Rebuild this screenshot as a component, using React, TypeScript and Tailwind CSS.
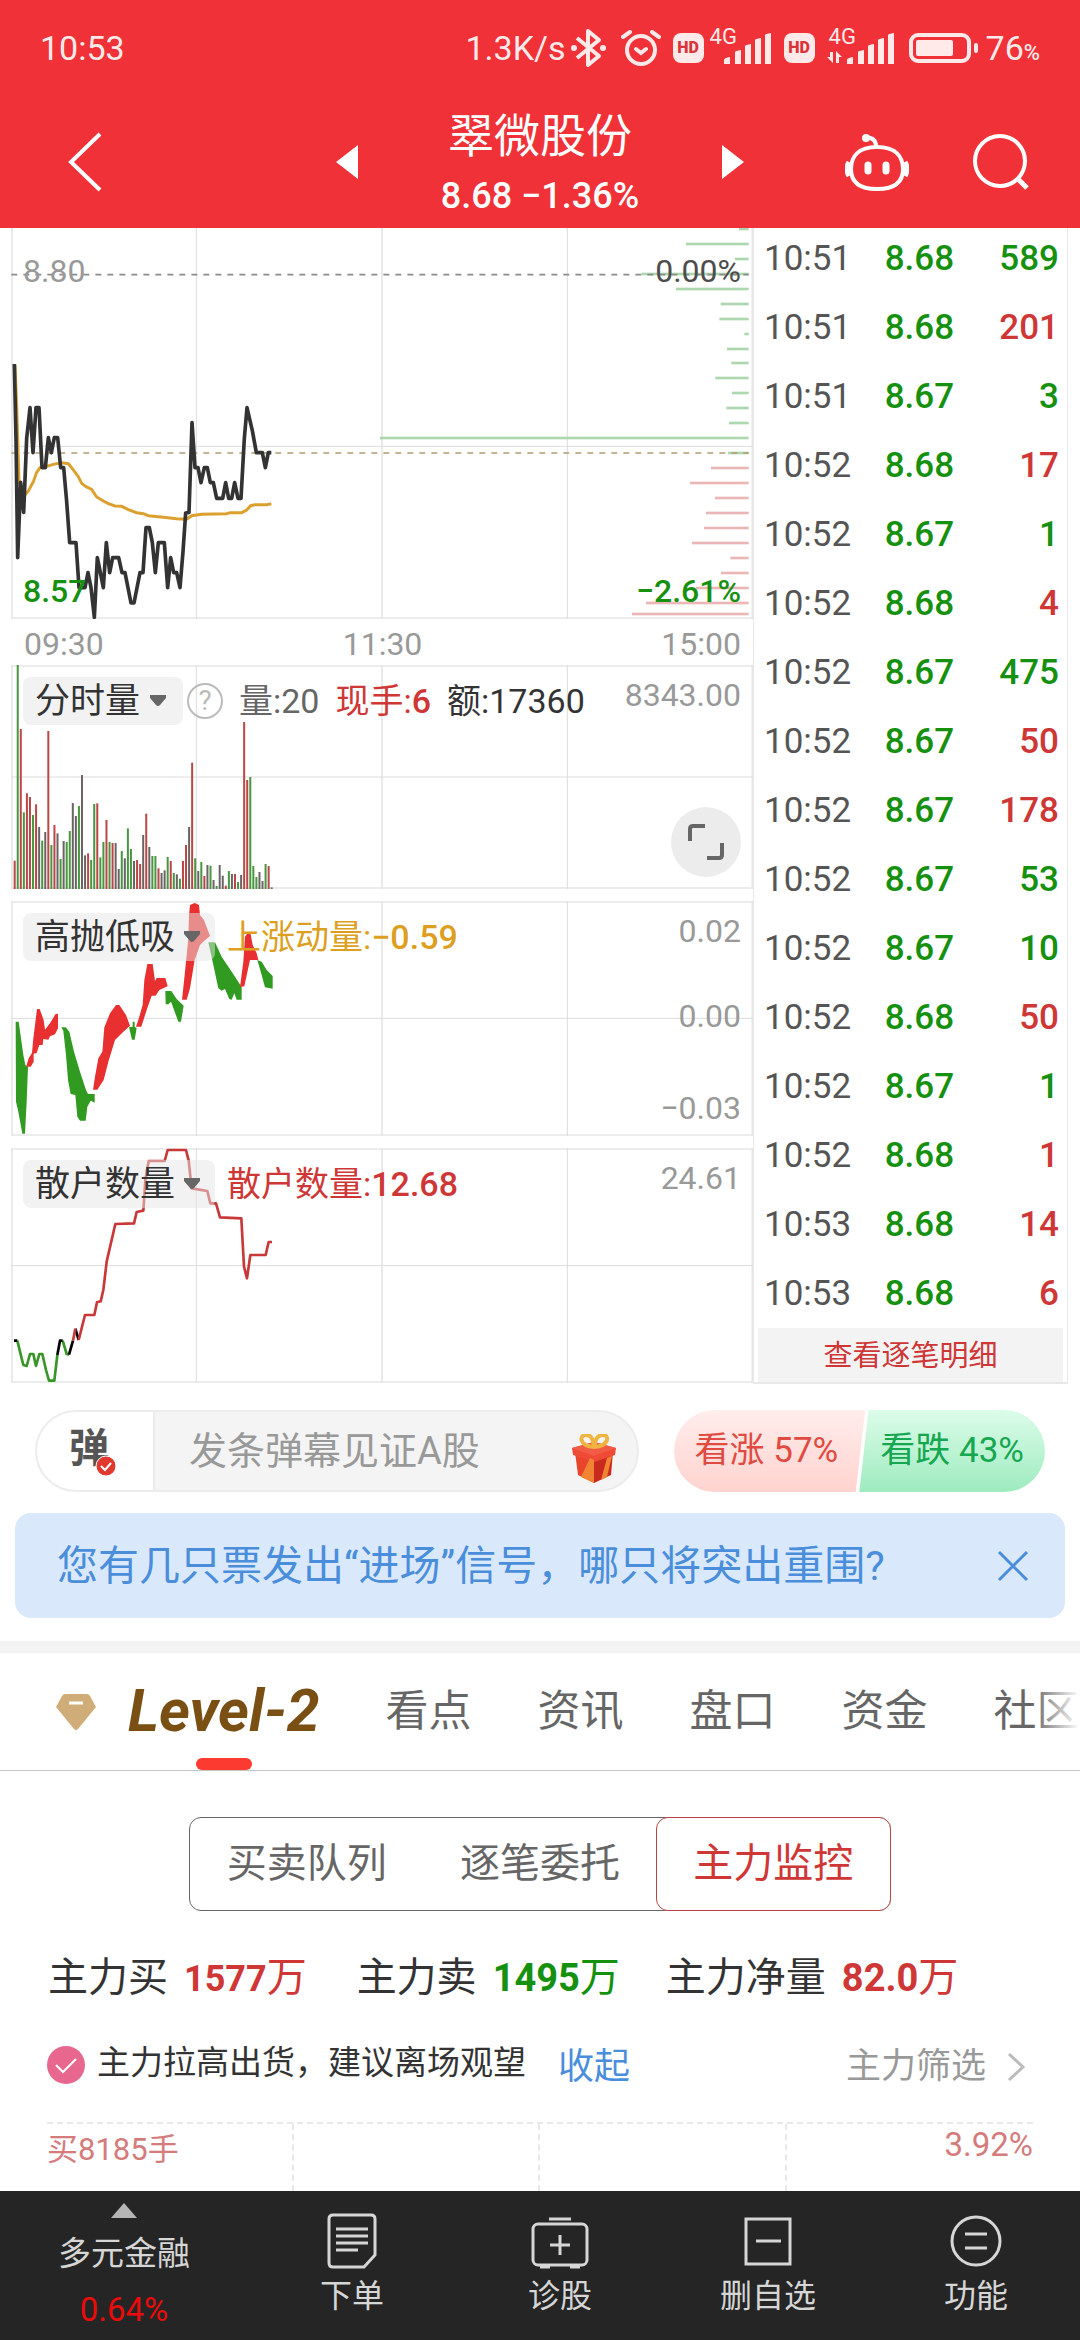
import React from "react";

const VOLUME =
  "602r 15g 207r 457g 400r 411r 465g 433r 501k 542g 516k 213r 555g 495r 520k 597g 543k 546g 513g 429k 468k 438g 345k 586k 580r 600g 432g 430r 592g 546g 480r 546g 549r 549k 627k 573g 595k 505g 567g 603k 600r 612r 525k 461r 561k 588g 588g 625r 639k 631k 591g 603r 639g 643k 656g 603r 555r 501k 308r 595g 633k 606g 648r 615k 617g 660k 678g 615k 647k 677r 633g 642k 642r 666g 645k 186r 360r 351g 618g 651g 636k 663k 612g 618r 682k"
    .split(" ")
    .map((s) => ({ top: parseInt(s, 10), tone: s.slice(-1) }));

const TONES: Record<string, string> = { r: "#bb4646", g: "#48963f", k: "#6b6464" };

const PRICE_VOLUME: [number, number, string][] = [
  [12, 1137, "g"], [57, 978, "g"], [102, 1125, "g"], [147, 845, "g"], [192, 948, "g"],
  [237, 1082, "g"], [282, 1078, "g"], [327, 1153, "g"], [372, 1101, "g"], [414, 1114, "g"],
  [459, 1066, "g"], [504, 1116, "g"], [549, 1099, "g"], [594, 1107, "g"], [639, 60, "g"],
  [684, 1104, "g"], [729, 1053, "r"], [774, 990, "r"], [819, 1065, "r"], [864, 1038, "r"],
  [909, 1032, "r"], [954, 996, "r"], [999, 1111, "r"], [1044, 1083, "r"], [1089, 1008, "r"],
  [1134, 858, "r"], [1167, 816, "r"],
];

const QUOTES: [string, string, string, boolean][] = [
  ["10:51", "8.68", "589", false],
  ["10:51", "8.68", "201", true],
  ["10:51", "8.67", "3", false],
  ["10:52", "8.68", "17", true],
  ["10:52", "8.67", "1", false],
  ["10:52", "8.68", "4", true],
  ["10:52", "8.67", "475", false],
  ["10:52", "8.67", "50", true],
  ["10:52", "8.67", "178", true],
  ["10:52", "8.67", "53", false],
  ["10:52", "8.67", "10", false],
  ["10:52", "8.68", "50", true],
  ["10:52", "8.67", "1", false],
  ["10:52", "8.68", "1", true],
  ["10:53", "8.68", "14", true],
  ["10:53", "8.68", "6", true],
];

function Grid({ top, mid, bottom }: { top: number; mid: number; bottom: number }) {
  return (
    <g stroke="#e6e6e6" strokeWidth="5" fill="none">
      <path d={`M36 ${top}V${bottom}M1146 ${top}V${bottom}M2257 ${top}V${bottom}M34 ${bottom - 3}H2259`} />
      <path stroke="#dcdcdc" strokeWidth="3" d={`M589 ${top}V${bottom}M1702 ${top}V${bottom}M34 ${mid}H2259`} />
    </g>
  );
}

function Plot({ box, children }: { box: string; children: React.ReactNode }) {
  return (
    <svg className="absolute inset-0 h-full w-full" viewBox={box} preserveAspectRatio="none" aria-hidden="true">
      {children}
    </svg>
  );
}

function IndicatorButton({ label, wide = false }: { label: string; wide?: boolean }) {
  return (
    <button
      className={
        wide
          ? "flex h-12 w-48 items-center justify-between rounded-lg bg-[#e5e5e5]/50 pl-3 pr-3.5 text-[35px] text-[#333]"
          : "flex h-12 w-40 items-center justify-between rounded-lg bg-[#e5e5e5]/50 pl-3 pr-4 text-[35px] text-[#333]"
      }
    >
      {label}
      <svg width="18" height="12" viewBox="0 0 18 12" aria-hidden="true">
        <path d="M1 0h16v3l-6 7q-2 2-4 0L1 3z" fill="#666" />
      </svg>
    </button>
  );
}

function Signal() {
  return (
    <svg width="48" height="31" viewBox="0 0 48 31" fill="#ffe9e9" aria-hidden="true">
      <path d="M0 31v-4q0-2 6-3v7zM11 31V19q0-1 6-2v14zM21 31V13q0-1 6-2v20zM31 31V7q0-1 6-2v26zM41 31V2q0-1 6-2v31z" />
    </svg>
  );
}

function Hd() {
  return (
    <span className="flex h-[30px] w-[31px] items-center justify-center rounded-lg bg-[#ffe9e9] text-base font-black text-[#d8353b]">
      HD
    </span>
  );
}

function StatusBar() {
  return (
    <div className="flex h-24 items-center pl-10 pr-10 text-[34px] text-[#ffe9e9]">
      <span>10:53</span>
      <span className="ml-auto">1.3K/s</span>
      <svg className="ml-1" width="37" height="40" viewBox="0 0 37 40" fill="none" stroke="currentColor" strokeWidth="4" aria-hidden="true">
        <path d="M7 10l22 18-11 9V3l11 9L7 30" strokeLinejoin="round" />
        <circle cx="4" cy="20" r="3" fill="currentColor" stroke="none" />
        <circle cx="33" cy="20" r="3" fill="currentColor" stroke="none" />
      </svg>
      <svg className="ml-3.5" width="40" height="38" viewBox="0 0 40 38" fill="none" stroke="currentColor" strokeWidth="4" strokeLinecap="round" aria-hidden="true">
        <circle cx="20" cy="21" r="14" />
        <path d="M15 20l5 4 5-4M2 8l7-5M31 3l7 5" />
      </svg>
      <span className="ml-3"><Hd /></span>
      <span className="relative ml-5 flex h-[31px] items-end">
        <span className="absolute -left-3.5 -top-2 text-[22px] leading-6">4G</span>
        <Signal />
      </span>
      <span className="ml-3"><Hd /></span>
      <span className="relative ml-3 flex h-[31px] items-end gap-1">
        <span className="absolute left-0.5 -top-2 text-[22px] leading-6">4G</span>
        <svg width="16" height="14" viewBox="0 0 16 14" fill="currentColor" aria-hidden="true">
          <path d="M3 2h3v11L0 7h3zM9 13V1l6 6h-3v6z" />
        </svg>
        <Signal />
      </span>
      <svg className="ml-3.5" width="69" height="30" viewBox="0 0 69 30" aria-hidden="true">
        <rect x="2" y="2" width="58" height="26" rx="7" fill="none" stroke="currentColor" strokeWidth="4" />
        <rect x="7" y="7" width="37" height="16" rx="2" fill="currentColor" />
        <rect x="65" y="10" width="4" height="10" rx="2" fill="currentColor" />
      </svg>
      <span className="ml-2 leading-none">
        76<span className="text-[22px] font-medium">%</span>
      </span>
    </div>
  );
}

function Header() {
  return (
    <header className="relative bg-[#f03138] text-white">
      <StatusBar />
      <div className="grid h-33 grid-cols-[1fr_auto_1fr] items-center px-[51px]">
        <button aria-label="返回" className="ml-3 w-12">
          <svg width="40" height="60" viewBox="0 0 40 60" fill="none" stroke="currentColor" strokeWidth="4" aria-hidden="true">
            <path d="M37 2L8 30l29 28" />
          </svg>
        </button>
        <div className="flex w-[408px] items-center justify-between">
          <button aria-label="上一只">
            <svg width="22" height="34" viewBox="0 0 22 34" fill="currentColor" aria-hidden="true">
              <path d="M22 0v34L0 17z" />
            </svg>
          </button>
          <div className="text-center">
            <h1 className="text-[46px] leading-[60px]">翠微股份</h1>
            <p className="pt-2 text-[36px] font-medium leading-[44px]">8.68 −1.36%</p>
          </div>
          <button aria-label="下一只">
            <svg width="22" height="34" viewBox="0 0 22 34" fill="currentColor" aria-hidden="true">
              <path d="M0 0v34l22-17z" />
            </svg>
          </button>
        </div>
        <div className="flex items-center justify-end gap-16">
          <button aria-label="智能助手">
            <svg width="64" height="60" viewBox="0 0 64 60" fill="none" stroke="currentColor" strokeWidth="4" aria-hidden="true">
              <path d="M32 15C50 15 58 24 58 37S50 57 32 57 6 50 6 37 14 15 32 15z" />
              <path d="M31 14q0-8-10-9" />
              <circle cx="21" cy="6" r="4" fill="currentColor" stroke="none" />
              <path d="M4 30q-4 7 0 14M60 30q4 7 0 14" strokeWidth="5" />
              <path d="M23 33v6M41 33v6" strokeWidth="7" strokeLinecap="round" />
            </svg>
          </button>
          <button aria-label="搜索">
            <svg width="56" height="56" viewBox="0 0 56 56" fill="none" stroke="currentColor" strokeWidth="4" aria-hidden="true">
              <circle cx="27" cy="27" r="25" />
              <path d="M44 44l10 10" strokeWidth="5" />
            </svg>
          </button>
        </div>
      </div>
    </header>
  );
}

function PricePanel() {
  return (
    <div className="relative flex h-[391px] flex-col justify-between pb-2 pl-[23px] pr-3 pt-[23px] text-[32px] leading-10">
      <Plot box="0 9 2259 1173">
        <Grid top={9} mid={664} bottom={1182} />
        {PRICE_VOLUME.map(([y, x, tone]) => (
          <rect key={y} x={x + 1080} y={y - 4} width={1166 - x} height="8" fill={tone === "g" ? "#add7ae" : "#eab6b6"} />
        ))}
        <path d="M34 149H2246" stroke="#8c8c8c" strokeWidth="5" strokeDasharray="18 18" />
        <path d="M34 684H2246" stroke="#b39b74" strokeWidth="5" strokeDasharray="18 18" />
        <path
          d="M45 420L50 540 57 770 75 810 85 798 100 770 110 742 120 728 140 724 160 718 185 713 205 716 215 728 235 755 245 775 258 785 275 793 290 816 310 828 325 836 345 843 365 844 385 854 410 863 430 866 445 872 490 877 530 881 560 883 575 872 605 868 680 866 690 863 725 863 740 855 752 842 765 839 800 839 814 836"
          fill="none" stroke="#dba02f" strokeWidth="9"
        />
        <path
          d="M43 417L48 640 53 998 62 772 71 862 80 640 90 548 99 683 108 548 117 548 126 728 136 728 145 638 154 683 163 638 173 638 182 728 191 728 200 830 209 953 228 953 237 1088 255 1088 264 1043 273 1088 283 1177 292 998 310 1088 319 953 329 1043 338 998 356 998 366 1043 375 1043 393 1134 402 1134 420 1043 429 1043 438 908 448 908 457 953 466 1043 475 953 493 953 503 1088 512 998 521 1043 530 1043 540 1088 549 980 557 864 567 862 576 593 585 728 594 728 603 773 613 728 622 728 631 773 640 773 650 820 668 820 677 773 686 820 695 820 704 773 714 820 723 820 733 640 741 548 757 617 769 683 787 683 796 728 805 683 814 683"
          fill="none" stroke="#333" strokeWidth="11" strokeLinejoin="round"
        />
      </Plot>
      <div className="relative flex justify-between">
        <span className="text-[#999]">8.80</span>
        <span className="text-[#4d4d4d]">0.00%</span>
      </div>
      <div className="relative flex justify-between font-medium text-[#15900f]">
        <span>8.57</span>
        <span>−2.61%</span>
      </div>
    </div>
  );
}

function VolumePanel() {
  return (
    <div className="relative flex h-56 flex-col justify-between pb-3 pl-[23px] pr-3 pt-3">
      <Plot box="0 15 2259 672">
        <path d="M34 18H2259" stroke="#e6e6e6" strokeWidth="5" />
        <Grid top={15} mid={351} bottom={687} />
        {VOLUME.map(({ top, tone }, i) => (
          <rect key={i} x={41 + i * 9.18} y={top} width="6" height={687 - top} fill={TONES[tone]} />
        ))}
      </Plot>
      <div className="relative flex items-center whitespace-nowrap text-[34px] leading-none">
        <IndicatorButton label="分时量" />
        <button aria-label="说明" className="ml-1 flex h-9 w-9 items-center justify-center rounded-full border-2 border-[#bbb] text-[28px] text-[#bbb]">?</button>
        <span className="ml-4 text-[#666]">量:20</span>
        <span className="ml-4 text-[#cf3636]">现手:<b className="font-medium">6</b></span>
        <span className="ml-4 text-[#333]">额:17360</span>
        <span className="ml-auto self-start text-[32px] leading-9 text-[#999]">8343.00</span>
      </div>
      <button aria-label="全屏" className="relative flex h-[70px] w-[70px] items-center justify-center self-end rounded-full bg-[#ececec]">
        <svg width="38" height="38" viewBox="0 0 38 38" fill="none" stroke="#666" strokeWidth="4" aria-hidden="true">
          <path d="M3 18V6q0-3 3-3h12M35 20v12q0 3-3 3H20" />
        </svg>
      </button>
    </div>
  );
}

function MomentumPanel() {
  return (
    <div className="relative mt-3 flex h-[235px] pl-[23px] pr-3 pt-3">
      <Plot box="0 18 2259 705">
        <path d="M34 21H2259" stroke="#e6e6e6" strokeWidth="5" />
        <Grid top={18} mid={370} bottom={723} />
        <g fill="#319a20">
          <path d="M47 380H56L70 480 76 510 84 515 80 620 75 716H67L55 650 48 620z" />
          <path d="M184 397H197L208 410 222 470 240 530 258 585 264 597H284V623L272 617 262 635 257 677H240L232 665 226 600 212 597 204 555 198 480 190 408z" />
          <path d="M387 397L398 395V380H404V395L410 400 404 434H396z" />
          <path d="M496 288H514L530 312 551 332 543 380H535L513 320 505 328H497z" />
          <path d="M625 142H645L665 185 700 238 725 276V314H710L703 295 695 314 688 312 675 282 665 287 655 280 640 210z" />
          <path d="M772 195L785 200 800 225 818 243V281L795 277 785 240z" />
        </g>
        <g fill="#e83031">
          <path d="M80 515H92L101 500V476L110 474 118 450H128L130 432 145 434 150 424 165 418 174 400V356L166 358 150 385 135 404 131 375 119 342H111L100 430 96 474 86 490 80 510z" />
          <path d="M279 584H292L311 555 325 500 345 435 370 410 390 392 378 360 358 330H348L330 355 313 397 307 470 295 490 285 545z" />
          <path d="M408 395H424L440 345 455 302H467L478 285 503 274 496 249H470L465 258 458 207H442L433 255 428 330 415 375z" />
          <path d="M546 314H560L570 280 584 195 600 150 612 138 630 123 612 75 600 60 597 30 584 24 570 30 567 60 565 130 555 230z" />
          <path d="M720 276L733 274 750 195H775L770 175 758 150 752 118 742 115 735 125 730 200z" />
        </g>
      </Plot>
      <div className="relative flex h-12 items-center whitespace-nowrap text-[34px] leading-none">
        <IndicatorButton label="高抛低吸" wide />
        <span className="ml-3 text-[#dd9f22]">上涨动量:<b className="font-medium">−0.59</b></span>
      </div>
      <div className="relative ml-auto flex flex-col justify-between pb-2.5 text-right text-[32px] leading-9 text-[#999]">
        <span>0.02</span>
        <span className="pb-2">0.00</span>
        <span>−0.03</span>
      </div>
    </div>
  );
}

function RetailPanel() {
  return (
    <div className="relative mt-3 flex h-[235px] pl-[23px] pr-3 pt-3">
      <Plot box="0 24 2259 705">
        <path d="M34 27H2259" stroke="#e6e6e6" strokeWidth="5" />
        <Grid top={24} mid={377} bottom={729} />
        <g fill="none" strokeWidth="8" strokeLinejoin="round">
          <path stroke="#379626" d="M52 602L60 635 70 675 80 678 90 642H100L108 678 118 642H127L138 690 147 722H163L172 645M188 602L200 642 207 644" />
          <path stroke="#000" d="M42 602H52M172 645L180 602H188M207 644L219 602M226 566L236 600" />
          <path stroke="#c93838" d="M219 602L226 566M236 600L255 525H283L291 487 302 484 310 450 320 365 346 252 402 250 410 216 430 212 436 120 446 63H494L503 30H558L566 62 575 145 622 153 631 190H648L660 232 724 235 732 380 741 415 751 345H797L806 306H816" />
        </g>
      </Plot>
      <div className="relative flex h-12 items-center whitespace-nowrap text-[34px] leading-none">
        <IndicatorButton label="散户数量" wide />
        <span className="ml-3 text-[#cf3636]">散户数量:<b className="font-medium">12.68</b></span>
      </div>
      <span className="relative ml-auto text-[32px] leading-9 text-[#999]">24.61</span>
    </div>
  );
}

function QuoteList() {
  return (
    <aside className="mr-3 flex flex-col border-b-2 border-l border-r border-[#e8e8e8]">
      <table className="-mt-1 w-full text-[35px] leading-none">
        <tbody>
          {QUOTES.map(([time, price, count, up], i) => (
            <tr key={i} className="h-[69px]">
              <td className="pl-2.5 text-[#555]">{time}</td>
              <td className="pl-0.5 font-medium text-[#15900f]">{price}</td>
              <td className={up ? "pr-2 text-right font-medium text-[#cf3636]" : "pr-2 text-right font-medium text-[#15900f]"}>{count}</td>
            </tr>
          ))}
        </tbody>
      </table>
      <button className="mx-1 h-[54px] bg-[#f3f3f3] pt-0.5 text-[29px] leading-10 text-[#cf3636]">查看逐笔明细</button>
    </aside>
  );
}

function Gift() {
  return (
    <svg width="46" height="50" viewBox="0 0 46 50" aria-hidden="true">
      <path d="M4 18l19 8v23L7 41z" fill="#e8452c" />
      <path d="M42 18l-19 8v23l17-8z" fill="#c92a20" />
      <path d="M1 14l22-6 22 6-1 7-21 7L2 21z" fill="#ee4a35" />
      <path d="M1 14l22 8 22-8-22-6z" fill="#f25b44" />
      <path d="M10 43l9-19 4 2v23zM30 46l6-22 5-2-5 21z" fill="#f08433" />
      <path d="M23 13C8 12 8 1 15 1s7 7 8 12c1-5 2-12 9-12s6 11-9 12z" fill="none" stroke="#f0b440" strokeWidth="4" />
    </svg>
  );
}

function Barrage() {
  return (
    <div className="flex items-center gap-[35px] px-[35px] pt-[26px]">
      <div className="flex h-[82px] flex-[602] overflow-hidden rounded-full border-2 border-[#ececec] bg-[#f4f4f4]">
        <button aria-label="弹幕开关" className="relative flex w-[118px] shrink-0 items-center border-r-2 border-[#ececec] bg-white pl-8 text-[40px] font-bold leading-none text-[#555]">
          <span className="relative pb-1">
            弹
            <svg className="absolute -bottom-1 -right-2" width="22" height="22" viewBox="0 0 22 22" aria-hidden="true">
              <circle cx="11" cy="11" r="10" fill="#e0392f" stroke="#fff" strokeWidth="1" />
              <path d="M6 11l4 4 6-7" fill="none" stroke="#fff" strokeWidth="2" />
            </svg>
          </span>
        </button>
        <input aria-label="发弹幕" placeholder="发条弹幕见证A股" className="w-0 min-w-0 flex-1 bg-transparent pl-[34px] text-[38px] text-[#333] outline-none placeholder:text-[#999]" />
        <button aria-label="礼物" className="pr-5 pt-4"><Gift /></button>
      </div>
      <div className="flex h-[82px] flex-[373] overflow-hidden rounded-full text-[35px]">
        <button className="flex-1 bg-gradient-to-b from-[#ffedec] to-[#ffd3cf] pr-1.5 text-[#e14a40] [clip-path:polygon(0_0,100%_0,95%_100%,0_100%)]">看涨 57%</button>
        <button className="-ml-1.5 flex-1 bg-gradient-to-b from-[#dcfcea] to-[#9debbf] text-[#16a750] [clip-path:polygon(5%_0,100%_0,100%_100%,0_100%)]">看跌 43%</button>
      </div>
    </div>
  );
}

function Banner() {
  return (
    <div className="mx-[15px] mt-[21px] flex h-[105px] items-center justify-between rounded-2xl bg-[#d9e8fb] pl-[42px] pr-[36px] text-[#4a8edb]">
      <a href="#signal" className="pt-0.5 text-[41px]">您有几只票发出“进场”信号，哪只将突出重围?</a>
      <button aria-label="关闭">
        <svg width="32" height="32" viewBox="0 0 32 32" fill="none" stroke="currentColor" strokeWidth="3" aria-hidden="true">
          <path d="M2 2l28 28M30 2L2 30" />
        </svg>
      </button>
    </div>
  );
}

function Tabs() {
  return (
    <nav className="relative mt-[23px] flex h-[130px] items-stretch gap-[66px] overflow-hidden whitespace-nowrap border-b border-t-[12px] border-b-[#c4c4c4] border-t-[#f3f3f3] pl-[56px] text-[43px] text-[#666]">
      <button className="flex items-center gap-8">
        <svg width="40" height="38" viewBox="0 0 40 38" aria-hidden="true">
          <path d="M9 1h22q2 0 3 2l6 11-18 22q-2 2-4 0L0 14 6 3q1-2 3-2z" fill="#d0ac78" />
          <path d="M13 10h14" stroke="#fff" strokeWidth="3" />
        </svg>
        <span className="relative flex h-full items-center text-[59px] font-bold italic text-[#7a4f14]">
          Level-2
          <span className="absolute bottom-0 left-1/2 h-3 w-14 -translate-x-1/2 rounded-full bg-[#fc3a30]" />
        </span>
      </button>
      <button>看点</button>
      <button>资讯</button>
      <button>盘口</button>
      <button>资金</button>
      <button>社区</button>
      <span className="pointer-events-none absolute inset-y-0 right-0 w-12 bg-gradient-to-r from-transparent to-white" />
    </nav>
  );
}

function Monitor() {
  return (
    <section>
      <div className="mx-auto mt-[46px] grid h-[94px] w-[65%] grid-cols-3 rounded-xl border border-[#666] text-[40px] text-[#666]">
        <button>买卖队列</button>
        <button>逐笔委托</button>
        <button className="-m-px rounded-xl border border-[#b84444] bg-white text-[#cf3636]">主力监控</button>
      </div>
      <div className="mt-9 flex h-[60px] items-center whitespace-nowrap px-12 pt-0.5 text-[40px] text-[#333]">
        <span>主力买</span>
        <span className="ml-4 text-[#cf3636]"><b className="text-[36px]">1577</b>万</span>
        <span className="ml-[50px]">主力卖</span>
        <span className="ml-4 text-[#15900f]"><b className="text-[38px]">1495</b>万</span>
        <span className="ml-[46px]">主力净量</span>
        <span className="ml-4 text-[#cf3636]"><b className="text-[38px]">82.0</b>万</span>
      </div>
      <div className="mt-7 flex h-[60px] items-center whitespace-nowrap pl-[47px] pr-[54px]">
        <svg width="38" height="38" viewBox="0 0 38 38" aria-hidden="true">
          <circle cx="19" cy="19" r="19" fill="#e8678f" />
          <path d="M9 19l7 7 13-13" fill="none" stroke="#fff" strokeWidth="2" />
        </svg>
        <span className="ml-3 pb-1 text-[33px] text-[#333]">主力拉高出货，建议离场观望</span>
        <button className="ml-8 pt-1 text-[36px] text-[#4a8edb]">收起</button>
        <button className="ml-auto flex items-center gap-5 pt-1 text-[35px] text-[#999]">
          主力筛选
          <svg width="20" height="30" viewBox="0 0 20 30" fill="none" stroke="#bbb" strokeWidth="3" aria-hidden="true">
            <path d="M3 2l14 13L3 28" />
          </svg>
        </button>
      </div>
      <div className="mx-[47px] mt-[27px] grid h-[69px] grid-cols-4 border-t-2 border-dashed border-[#e8e8e8] leading-none text-[#d47c7c]">
        <span className="border-r-2 border-dashed border-[#e8e8e8] pt-2.5 text-[31px]">买8185手</span>
        <span className="border-r-2 border-dashed border-[#e8e8e8]" />
        <span className="border-r-2 border-dashed border-[#e8e8e8]" />
        <span className="pt-1 text-right text-[33px]">3.92%</span>
      </div>
    </section>
  );
}

function BottomItem({ label, children }: { label: string; children: React.ReactNode }) {
  return (
    <button className="flex flex-col items-center pt-5">
      <svg width="60" height="60" viewBox="0 0 60 60" fill="none" stroke="#d6d6d6" strokeWidth="3" aria-hidden="true">
        {children}
      </svg>
      <span className="pt-1 leading-[42px]">{label}</span>
    </button>
  );
}

function BottomBar() {
  return (
    <footer className="grid h-[149px] grid-cols-[248fr_208fr_208fr_208fr_208fr] bg-[#252525] text-[32px] text-[#d6d6d6]">
      <button className="flex flex-col items-center pt-3 text-[33px]">
        <svg width="26" height="15" viewBox="0 0 26 15" aria-hidden="true">
          <path d="M13 0l13 15H0z" fill="#b5b5b5" />
        </svg>
        <span className="pt-3 leading-[48px]">多元金融</span>
        <span className="pt-2 leading-[48px] text-[#ea0b0b]">0.64%</span>
      </button>
      <BottomItem label="下单">
        <path d="M11 4h38q4 0 4 4v36L42 56H11q-4 0-4-4V8q0-4 4-4z" />
        <path d="M14 18h32M14 25h32M14 32h32M14 39h22" />
      </BottomItem>
      <BottomItem label="诊股">
        <rect x="3" y="13" width="54" height="41" rx="5" />
        <path d="M19 8h22M10 56h10M40 56h10M30 24v20M20 34h20" />
      </BottomItem>
      <BottomItem label="删自选">
        <path d="M8 8h44v45H8zM18 30h25" />
      </BottomItem>
      <BottomItem label="功能">
        <circle cx="30" cy="30" r="24" />
        <path d="M19 23h22M19 37h22" />
      </BottomItem>
    </footer>
  );
}

export default function App() {
  return (
    <div className="flex min-h-screen flex-col overflow-hidden bg-white font-[Roboto,'Noto_Sans_CJK_SC',sans-serif]">
      <Header />
      <main className="flex-1">
        <div className="grid grid-cols-[753fr_327fr]">
          <div>
            <PricePanel />
            <div className="flex h-[46px] items-center justify-between pl-6 pr-3 pt-1 text-[32px] text-[#999]">
              <span>09:30</span>
              <span>11:30</span>
              <span>15:00</span>
            </div>
            <VolumePanel />
            <MomentumPanel />
            <RetailPanel />
          </div>
          <QuoteList />
        </div>
        <Barrage />
        <Banner />
        <Tabs />
        <Monitor />
      </main>
      <BottomBar />
    </div>
  );
}
